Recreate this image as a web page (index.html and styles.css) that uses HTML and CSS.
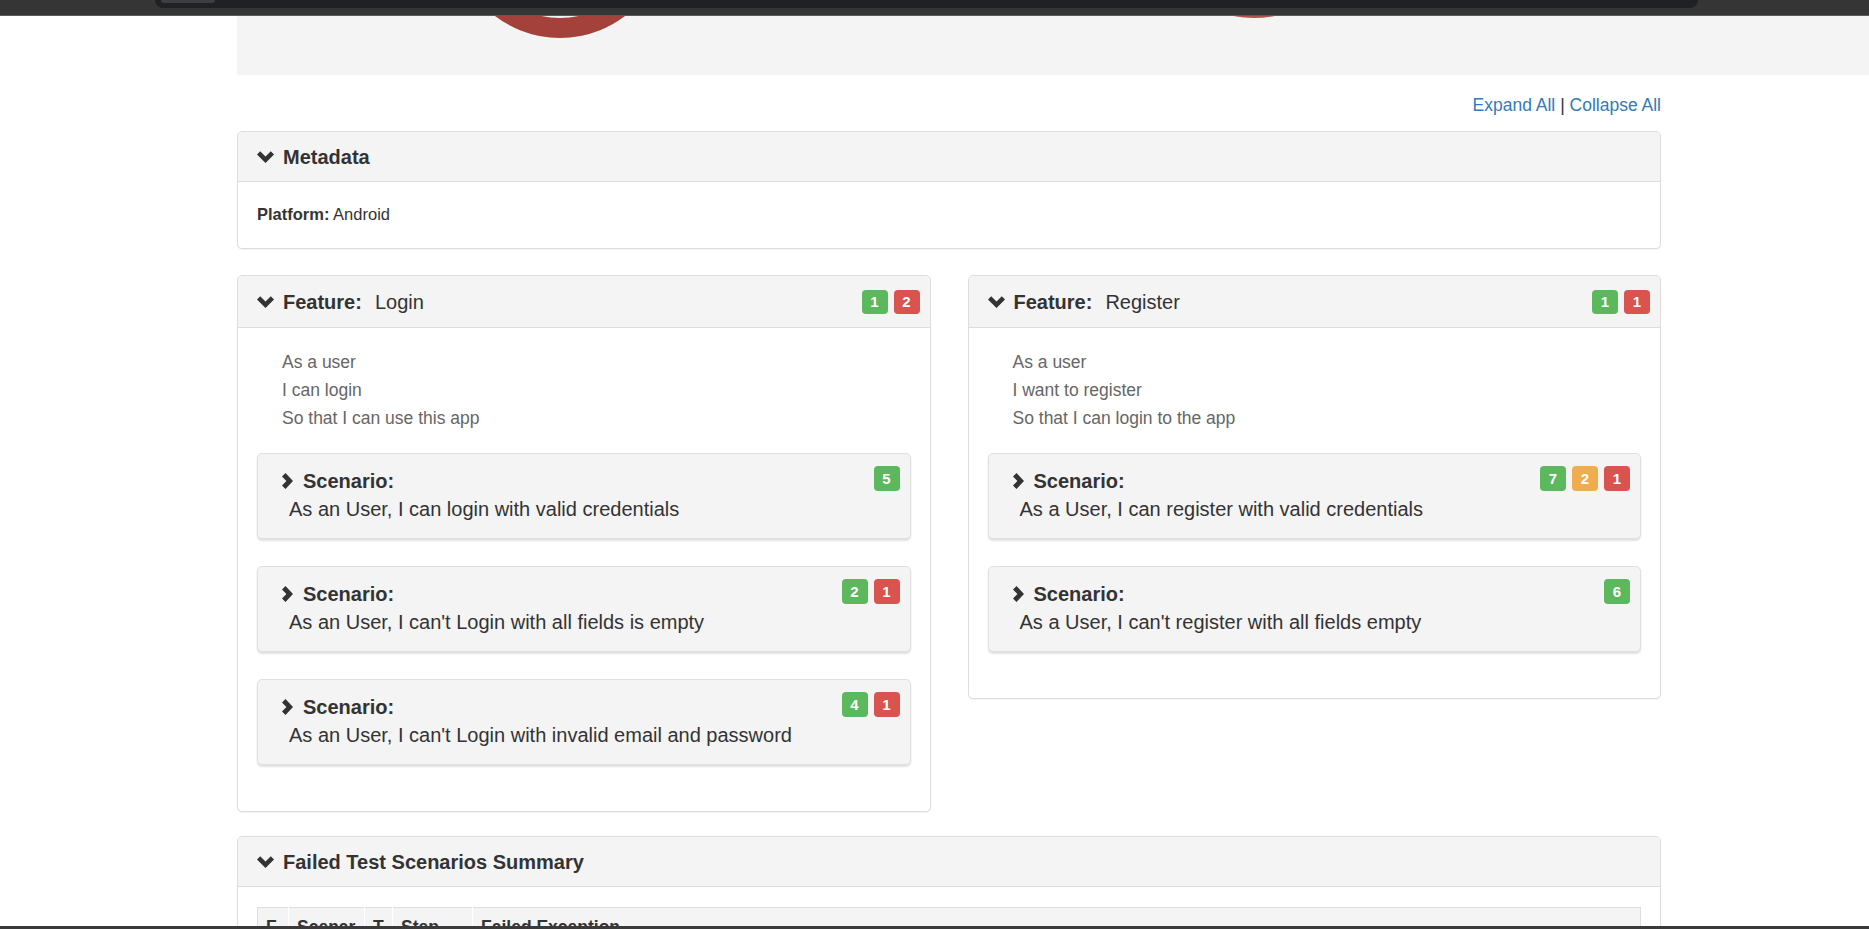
FILE: index.html
```html
<!DOCTYPE html>
<html lang="en">
<head>
<meta charset="utf-8">
<title>Cucumber Report</title>
<link rel="stylesheet" href="styles.css">
</head>
<body>
<div class="screen">
  <div class="topbar"><div class="tabstrip"><div class="tabstub"></div></div></div>
  <div class="viewport">
    <div class="hero">
      <svg width="1632" height="59" viewBox="0 0 1632 59">
        <circle cx="323" cy="-85" r="97" fill="none" stroke="#a3413a" stroke-width="20"/>
        <circle cx="1017" cy="-105" r="97" fill="none" stroke="#b4544d" stroke-width="20"/>
      </svg>
    </div>
    <div class="container">
      <div class="toolbar"><a href="#">Expand All</a> | <a href="#">Collapse All</a></div>

      <div class="panel meta">
        <div class="panel-heading">
          <div class="heading-title">
            <svg class="chev-down" width="17" height="12" viewBox="0 0 17 12"><polygon points="0,3.5 3.2,0.2 8.5,5.5 13.8,0.2 17,3.5 8.5,12" fill="#333"/></svg>
            <span>Metadata</span>
          </div>
        </div>
        <div class="panel-body meta-body"><b>Platform:</b> Android</div>
      </div>

      <div class="features">
        <div class="panel feature">
          <div class="panel-heading feature-heading">
            <div class="heading-title">
              <svg class="chev-down" width="17" height="12" viewBox="0 0 17 12"><polygon points="0,3.5 3.2,0.2 8.5,5.5 13.8,0.2 17,3.5 8.5,12" fill="#333"/></svg>
              <span>Feature:</span><span class="feature-name">Login</span>
            </div>
            <div class="badges"><span class="badge ok">1</span><span class="badge fail">2</span></div>
          </div>
          <div class="panel-body feature-body">
            <div class="description">
              <div>As a user</div>
              <div>I can login</div>
              <div>So that I can use this app</div>
            </div>
            <div class="scenarios">
              <div class="scenario">
                <div class="scenario-text">
                  <div class="scenario-title"><svg class="chev-right" width="11" height="16" viewBox="0 0 11 16"><polygon points="3.5,0 11,8 3.5,16 0,12.6 4.4,8 0,3.4" fill="#333"/></svg><b>Scenario:</b></div>
                  <div class="scenario-name">As an User, I can login with valid credentials</div>
                </div>
                <div class="badges"><span class="badge ok">5</span></div>
              </div>
              <div class="scenario">
                <div class="scenario-text">
                  <div class="scenario-title"><svg class="chev-right" width="11" height="16" viewBox="0 0 11 16"><polygon points="3.5,0 11,8 3.5,16 0,12.6 4.4,8 0,3.4" fill="#333"/></svg><b>Scenario:</b></div>
                  <div class="scenario-name">As an User, I can't Login with all fields is empty</div>
                </div>
                <div class="badges"><span class="badge ok">2</span><span class="badge fail">1</span></div>
              </div>
              <div class="scenario">
                <div class="scenario-text">
                  <div class="scenario-title"><svg class="chev-right" width="11" height="16" viewBox="0 0 11 16"><polygon points="3.5,0 11,8 3.5,16 0,12.6 4.4,8 0,3.4" fill="#333"/></svg><b>Scenario:</b></div>
                  <div class="scenario-name">As an User, I can't Login with invalid email and password</div>
                </div>
                <div class="badges"><span class="badge ok">4</span><span class="badge fail">1</span></div>
              </div>
            </div>
          </div>
        </div>

        <div class="panel feature">
          <div class="panel-heading feature-heading">
            <div class="heading-title">
              <svg class="chev-down" width="17" height="12" viewBox="0 0 17 12"><polygon points="0,3.5 3.2,0.2 8.5,5.5 13.8,0.2 17,3.5 8.5,12" fill="#333"/></svg>
              <span>Feature:</span><span class="feature-name">Register</span>
            </div>
            <div class="badges"><span class="badge ok">1</span><span class="badge fail">1</span></div>
          </div>
          <div class="panel-body feature-body">
            <div class="description">
              <div>As a user</div>
              <div>I want to register</div>
              <div>So that I can login to the app</div>
            </div>
            <div class="scenarios">
              <div class="scenario">
                <div class="scenario-text">
                  <div class="scenario-title"><svg class="chev-right" width="11" height="16" viewBox="0 0 11 16"><polygon points="3.5,0 11,8 3.5,16 0,12.6 4.4,8 0,3.4" fill="#333"/></svg><b>Scenario:</b></div>
                  <div class="scenario-name">As a User, I can register with valid credentials</div>
                </div>
                <div class="badges"><span class="badge ok">7</span><span class="badge warn">2</span><span class="badge fail">1</span></div>
              </div>
              <div class="scenario">
                <div class="scenario-text">
                  <div class="scenario-title"><svg class="chev-right" width="11" height="16" viewBox="0 0 11 16"><polygon points="3.5,0 11,8 3.5,16 0,12.6 4.4,8 0,3.4" fill="#333"/></svg><b>Scenario:</b></div>
                  <div class="scenario-name">As a User, I can't register with all fields empty</div>
                </div>
                <div class="badges"><span class="badge ok">6</span></div>
              </div>
            </div>
          </div>
        </div>
      </div>

      <div class="panel failed">
        <div class="panel-heading failed-heading">
          <div class="heading-title">
            <svg class="chev-down" width="17" height="12" viewBox="0 0 17 12"><polygon points="0,3.5 3.2,0.2 8.5,5.5 13.8,0.2 17,3.5 8.5,12" fill="#333"/></svg>
            <span>Failed Test Scenarios Summary</span>
          </div>
        </div>
        <div class="panel-body failed-body">
          <table class="summary">
            <thead>
              <tr>
                <th class="c-feature">Feature</th>
                <th class="c-scenario">Scenario</th>
                <th class="c-tags">Tags</th>
                <th class="c-step">Step</th>
                <th class="c-exception">Failed Exception</th>
              </tr>
            </thead>
          </table>
        </div>
      </div>
    </div>
  </div>
  <div class="bottombar"></div>
</div>
</body>
</html>
```
FILE: styles.css
```css
* { box-sizing: border-box; }
html, body { margin: 0; padding: 0; height: 100%; overflow: hidden; }
body {
  font-family: "Liberation Sans", Arial, Helvetica, sans-serif;
  font-size: 17.5px;
  line-height: 25px;
  color: #333;
  background: #fff;
}
.screen { height: 929px; display: flex; flex-direction: column; }

/* browser overlay strip */
.topbar { flex: none; height: 16px; background: #353535; border-bottom: 1px solid #5a5a5a; }
.tabstrip { margin-left: 155px; width: 1543px; height: 8px; background: #202124; border-radius: 0 0 8px 8px; padding-left: 6px; }
.tabstub { width: 54px; height: 3px; background: #3d3e41; border-radius: 0 0 3px 3px; }
.viewport { flex: 1; overflow: hidden; }
.bottombar { flex: none; height: 3px; background: #3a3a3a; }

/* hero with charts */
.hero { margin-left: 237px; height: 59px; background: #f4f4f4; overflow: hidden; }
.hero svg { display: block; }

.container { margin-left: 237px; width: 1424px; }
.toolbar { text-align: right; margin-top: 18px; margin-bottom: 13px; line-height: 25px; }
.toolbar a { color: #337ab7; text-decoration: none; }

/* panels */
.panel {
  border: 1px solid #ddd;
  border-radius: 5px;
  background: #fff;
  box-shadow: 0 1px 1px rgba(0, 0, 0, 0.05);
}
.panel-heading {
  display: flex;
  align-items: center;
  justify-content: space-between;
  height: 50px;
  padding: 0 10px 0 19px;
  background: #f4f4f4;
  border-bottom: 1px solid #ddd;
  border-radius: 4px 4px 0 0;
}
.feature-heading { height: 52px; }
.heading-title {
  display: flex;
  align-items: center;
  font-size: 20px;
  font-weight: bold;
  line-height: 28px;
  color: #333;
}
.chev-down { display: block; margin-right: 9px; flex: none; }
.feature-name { font-weight: normal; margin-left: 13px; }

.meta { margin-bottom: 26px; }
.meta-body { padding: 20px 19px 22px; font-size: 16.5px; line-height: 24px; }

.features {
  display: grid;
  grid-template-columns: 1fr 1fr;
  column-gap: 37px;
  align-items: start;
  margin-bottom: 24px;
}
.feature-body { padding: 20px 19px 46px; }
.description { padding-left: 25px; color: #666; font-size: 17.5px; line-height: 28px; margin-bottom: 21px; }
.scenarios { display: flex; flex-direction: column; gap: 27px; }
.scenario {
  display: flex;
  justify-content: space-between;
  align-items: flex-start;
  padding: 13px 10px 15px 24px;
  background: #f4f4f4;
  border: 1px solid #e0e0e0;
  border-radius: 5px;
  box-shadow: 0 2px 2px rgba(0, 0, 0, 0.12);
}
.scenario-text { font-size: 20px; line-height: 28px; color: #333; }
.scenario-title { display: flex; align-items: center; }
.chev-right { display: block; margin-right: 10px; flex: none; }
.scenario-name { padding-left: 7px; }

.badges { display: flex; gap: 6px; }
.scenario .badges { margin-top: -1px; }
.badge {
  display: inline-flex;
  align-items: center;
  justify-content: center;
  min-width: 26px;
  height: 24px;
  padding: 0 6px;
  border-radius: 4px;
  color: #fff;
  font-size: 15px;
  font-weight: bold;
  line-height: 1;
}
.scenario .badge { height: 25px; }
.ok { background: #5cb85c; }
.fail { background: #d9534f; }
.warn { background: #f0ad4e; }

/* failed summary */
.failed-body { padding: 20px 19px; }
.summary {
  width: 100%;
  border-collapse: collapse;
  table-layout: fixed;
  border: 1px solid #ddd;
}
.summary th {
  background: #f4f4f4;
  text-align: left;
  font-weight: bold;
  font-size: 17.5px;
  line-height: 25px;
  padding: 7px 8px;
  border-left: 1px solid #fff;
  word-break: break-all;
  vertical-align: top;
}
.summary th:first-child { border-left: none; }
.c-feature { width: 31px; }
.c-scenario { width: 76px; }
.c-tags { width: 28px; }
.c-step { width: 80px; }
```
